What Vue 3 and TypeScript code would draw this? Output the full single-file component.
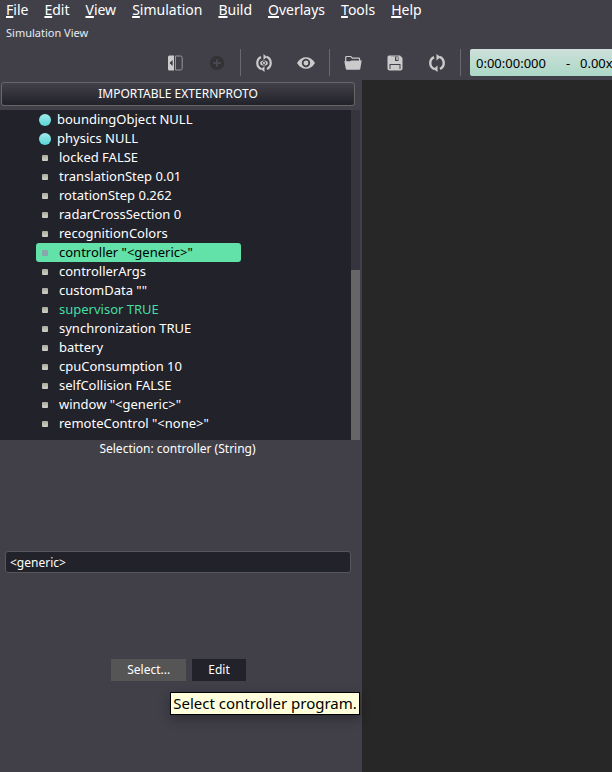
<script setup lang="ts">
import { ref } from 'vue'

interface Field {
  label: string
  kind: 'node' | 'value'
  modified?: boolean
}

const menus: string[] = ['File', 'Edit', 'View', 'Simulation', 'Build', 'Overlays', 'Tools', 'Help']

const fields: Field[] = [
  { label: 'boundingObject NULL', kind: 'node' },
  { label: 'physics NULL', kind: 'node' },
  { label: 'locked FALSE', kind: 'value' },
  { label: 'translationStep 0.01', kind: 'value' },
  { label: 'rotationStep 0.262', kind: 'value' },
  { label: 'radarCrossSection 0', kind: 'value' },
  { label: 'recognitionColors', kind: 'value' },
  { label: 'controller "<generic>"', kind: 'value' },
  { label: 'controllerArgs', kind: 'value' },
  { label: 'customData ""', kind: 'value' },
  { label: 'supervisor TRUE', kind: 'value', modified: true },
  { label: 'synchronization TRUE', kind: 'value' },
  { label: 'battery', kind: 'value' },
  { label: 'cpuConsumption 10', kind: 'value' },
  { label: 'selfCollision FALSE', kind: 'value' },
  { label: 'window "<generic>"', kind: 'value' },
  { label: 'remoteControl "<none>"', kind: 'value' },
]

const selected = ref(7)
const controller = ref('<generic>')
</script>

<template>
  <div class="app">
    <nav class="menubar">
      <button v-for="menu in menus" :key="menu" type="button" class="menu">
        <span class="mnemonic">{{ menu.charAt(0) }}</span>{{ menu.slice(1) }}
      </button>
    </nav>

    <h1 class="view-title">Simulation View</h1>

    <div class="toolbar" role="toolbar">
      <button type="button" class="tool" aria-label="Hide scene tree">
        <svg width="18" height="18" viewBox="0 0 18 18">
          <path d="M3.5 1.5H8v15H3.5a1.5 1.5 0 0 1-1.500-1.500V3a1.500 1.500 0 0 1 1.500-1.500z" fill="#cbcbcb" />
          <path d="M6.600 6v6L3.600 9z" fill="#35353b" />
          <path d="M9.500 2h5a1.700 1.700 0 0 1 1.700 1.700v10.600a1.700 1.700 0 0 1-1.700 1.700h-5z" fill="none" stroke="#96969a" />
        </svg>
      </button>
      <button type="button" class="tool" aria-label="Add object" disabled>
        <svg width="18" height="18" viewBox="0 0 18 18">
          <circle cx="9" cy="9" r="7.200" fill="#333336" />
          <path d="M9 5.200v7.600M5.200 9h7.600" stroke="#484850" stroke-width="2" />
        </svg>
      </button>
      <span class="divider"></span>
      <button type="button" class="tool" aria-label="Restore viewpoint">
        <svg width="18" height="18" viewBox="0 0 18 18">
          <g fill="none" stroke="#cbcbcb" stroke-width="2.200">
            <path d="M6.500 15.200A6.600 6.600 0 0 1 6 3.100" />
            <path d="M11.500 2.800A6.600 6.600 0 0 1 12 14.900" />
          </g>
          <path d="M8.500 0v5.800L12 2.900zM9.500 12.200V18L6 15.100z" fill="#cbcbcb" />
          <ellipse cx="9" cy="9" rx="3.800" ry="2.600" fill="#cbcbcb" />
          <circle cx="9" cy="9" r="1.600" fill="none" stroke="#55555c" stroke-width="1" />
        </svg>
      </button>
      <button type="button" class="tool" aria-label="Change view">
        <svg width="18" height="18" viewBox="0 0 18 18">
          <path d="M0 9Q3.500 3.200 9 3.200T18 9Q14.500 14.800 9 14.800T0 9z" fill="#cbcbcb" />
          <circle cx="9" cy="9" r="3.300" fill="#cbcbcb" stroke="#424049" stroke-width="1.800" />
        </svg>
      </button>
      <span class="divider"></span>
      <button type="button" class="tool" aria-label="Open world">
        <svg width="18" height="18" viewBox="0 0 18 18">
          <path d="M1.700 8V3.300q0-.8.800-.8h4.300l1.700 1.700h6.300q.8 0 .8.800v2" fill="none" stroke="#cbcbcb" stroke-width="1.200" />
          <path d="M.3 7.300h5.900l1.300-.8h10.200l-1.400 8.200q-.2 1-1.200 1H3q-1 0-1.200-1z" fill="#cbcbcb" />
        </svg>
      </button>
      <button type="button" class="tool" aria-label="Save world">
        <svg width="18" height="18" viewBox="0 0 18 18">
          <path d="M3 1.500h11L16.500 4v10.500a2 2 0 0 1-2 2h-11a2 2 0 0 1-2-2V3a1.500 1.500 0 0 1 1.500-1.500z" fill="#cbcbcb" />
          <path d="M5 2.500h7.500V7H5zM3.500 10h11v5h-11z" fill="#424049" />
          <path d="M5 2.500h4V7H5zM4.500 11h9v4h-9z" fill="#cbcbcb" />
          <path d="M10.300 3h1.500v3h-1.500z" fill="#cbcbcb" />
        </svg>
      </button>
      <button type="button" class="tool" aria-label="Reload world">
        <svg width="18" height="18" viewBox="0 0 18 18">
          <g fill="none" stroke="#cbcbcb" stroke-width="2.400">
            <path d="M6.500 15.200A6.600 6.600 0 0 1 6 3.100" />
            <path d="M11.500 2.800A6.600 6.600 0 0 1 12 14.900" />
          </g>
          <path d="M8.500 0v6.400L12.500 3zM9.500 11.600V18l-4-3z" fill="#cbcbcb" />
        </svg>
      </button>
      <span class="divider"></span>
      <output class="clock">
        <span class="time">0:00:00:000</span>
        <span class="dash">-</span>
        <span>0.00x</span>
      </output>
    </div>

    <main class="workspace">
      <section class="side">
        <button type="button" class="extern">IMPORTABLE EXTERNPROTO</button>

        <div class="tree">
          <ul class="fields">
            <li
              v-for="(field, index) in fields"
              :key="field.label"
              class="field"
              :class="[field.kind, { modified: field.modified, selected: index === selected }]"
              @click="selected = index"
            >
              <span class="bullet"></span>{{ field.label }}
            </li>
          </ul>
          <div class="track"><div class="thumb"></div></div>
        </div>

        <label class="selection" for="controller">Selection: controller (String)</label>
        <input id="controller" v-model="controller" class="value-input" type="text" />

        <div class="actions">
          <div class="anchor">
            <button type="button" class="action hovered" aria-describedby="tip">Select...</button>
            <div id="tip" class="tooltip" role="tooltip">Select controller program.</div>
          </div>
          <button type="button" class="action">Edit</button>
        </div>
      </section>
      <section class="viewport"></section>
    </main>
  </div>
</template>

<style>
body {
  background: #414049;
}
</style>

<style scoped>
.app {
  display: flex;
  flex-direction: column;
  min-height: 100vh;
  overflow: hidden;
  background: #414049;
  color: #fff;
  font-family: "Noto Sans", "Open Sans", sans-serif;
  font-size: 12px;
}

button,
input {
  box-sizing: border-box;
  margin: 0;
  padding: 0;
  border: 0;
  background: none;
  color: inherit;
  font: inherit;
}

.menubar {
  display: flex;
  gap: 16px;
  height: 20px;
  padding-left: 6px;
}

.menu {
  font-size: 14px;
  line-height: 20px;
  white-space: nowrap;
}

.mnemonic {
  text-decoration: underline;
  text-decoration-thickness: 2px;
  text-underline-offset: 1px;
}

.view-title {
  margin: 0;
  padding: 4px 6px 0;
  color: #e4edf2;
  font-size: 11px;
  font-weight: 400;
  line-height: 18px;
}

.toolbar {
  box-sizing: border-box;
  display: flex;
  align-items: flex-end;
  height: 38px;
  padding: 0 0 4px 154px;
}

.tool {
  flex: none;
  display: flex;
  align-items: center;
  justify-content: center;
  width: 42px;
  height: 27px;
}

.divider {
  flex: none;
  width: 1px;
  height: 27px;
  margin: 0 2px;
  background: #69696d;
}

.clock {
  flex: none;
  display: flex;
  align-items: center;
  width: 200px;
  height: 27px;
  margin-left: 7px;
  padding-left: 6px;
  border-radius: 2px;
  background: linear-gradient(#cee0da, #abd8c7);
  color: #000;
  font-size: 13px;
}

.time {
  width: 90px;
}

.dash {
  width: 14px;
}

.workspace {
  flex: 1;
  display: grid;
  grid-template-columns: 181fr 125fr;
}

.side {
  display: flex;
  flex-direction: column;
  min-width: 0;
  padding-right: 2px;
}

.extern {
  height: 24px;
  margin: 2px 5px 4px 1px;
  border: 1px solid #67676a;
  border-radius: 3px;
  background: linear-gradient(#42414b, #22222a);
  line-height: 22px;
}

.tree {
  display: flex;
  background: #22222a;
}

.fields {
  flex: 1;
  margin: 0;
  padding: 0 0 7px 36px;
  list-style: none;
}

.field {
  display: flex;
  align-items: center;
  width: 65%;
  height: 19px;
  border-radius: 3px;
  font-size: 13px;
  line-height: 19px;
  white-space: nowrap;
}

.field.modified {
  color: #45dfa5;
}

.field.selected {
  background: #62e1a8;
  color: #000;
}

.bullet {
  flex: none;
}

.node .bullet {
  width: 12px;
  height: 12px;
  margin: 0 6px 0 3px;
  border-radius: 50%;
  background: linear-gradient(#a4ebeb, #56d6d6);
}

.value .bullet {
  width: 6px;
  height: 6px;
  margin: 0 11px 0 6px;
  border-radius: 1px;
  background: linear-gradient(#aaa99c, #d0d0c8);
}

.selected .bullet {
  background: #8ba5ad;
}

.track {
  display: flex;
  flex-direction: column;
  justify-content: flex-end;
  width: 9px;
  background: #35343f;
}

.thumb {
  height: 170px;
  background: #666;
}

.selection {
  margin-right: 5px;
  line-height: 17px;
  text-align: center;
}

.value-input {
  height: 22px;
  margin: 94px 9px 0 5px;
  padding: 0 4px;
  border: 1px solid #56565b;
  border-radius: 3px;
  background: #22222a;
}

.actions {
  display: flex;
  justify-content: center;
  gap: 6px;
  margin: 86px 3px 0 0;
}

.anchor {
  position: relative;
}

.action {
  height: 22px;
  padding: 0 16px;
  background: #22222a;
  line-height: 22px;
}

.action.hovered {
  background: #555;
}

.tooltip {
  position: absolute;
  top: 33px;
  left: 59px;
  padding: 0 2px;
  border: 1px solid #000;
  background: #ffffdc;
  box-shadow: 0 4px 12px rgba(0, 0, 0, 0.3);
  color: #000;
  font-size: 15px;
  line-height: 21px;
  white-space: nowrap;
}

.viewport {
  background: #272727;
}
</style>
